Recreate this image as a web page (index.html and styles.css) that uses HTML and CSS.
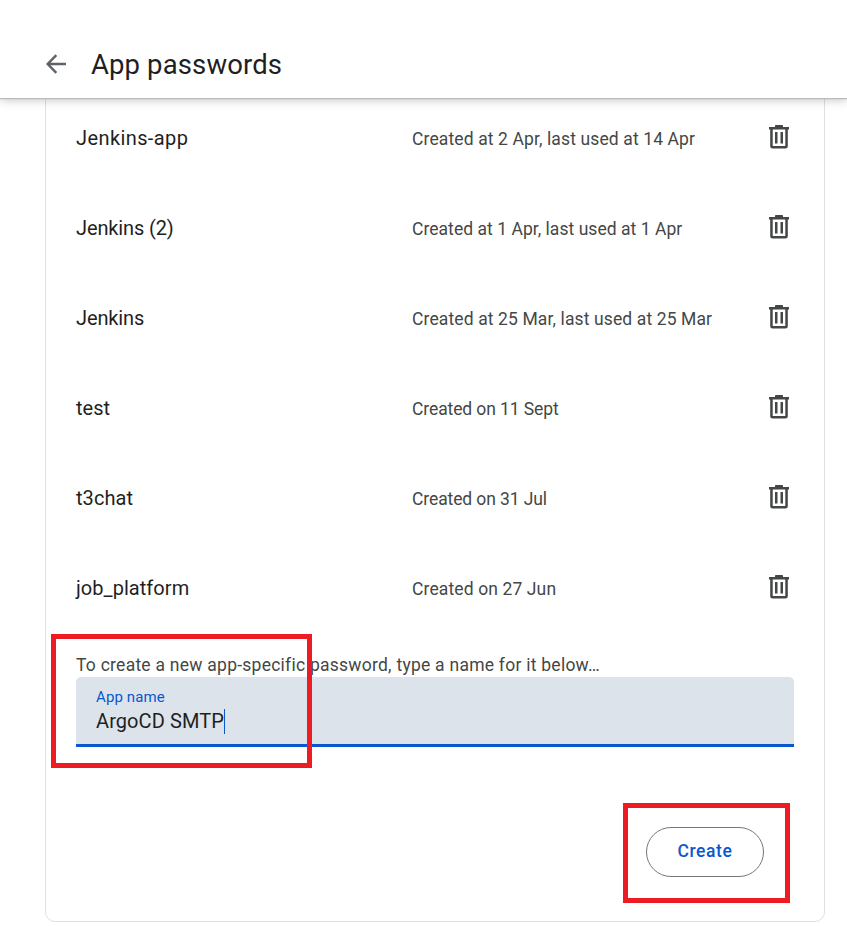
FILE: index.html
```html
<!DOCTYPE html>
<html lang="en-GB">
<head>
<meta charset="utf-8">
<title>App passwords</title>
<link rel="stylesheet" href="styles.css">
</head>
<body>
<svg class="defs" aria-hidden="true">
  <symbol id="trash" viewBox="0 0 20 24">
    <path fill-rule="evenodd" d="M6 .8a.8.8 0 0 1 .8-.8h6.400a.8.800 0 0 1 .8.8V2h6v2.500h-1.200V21a2.500 2.500 0 0 1-2.500 2.500H3.700A2.500 2.500 0 0 1 1.200 21V4.500H0V2h6zM3.700 4.500V21h12.600V4.500z"/>
    <path d="M6 7h2.500v11.500H6zM11.500 7H14v11.500h-2.500z"/>
  </symbol>
</svg>
<header class="topbar">
  <svg class="back" viewBox="0 0 20 20"><path d="M20 10H2M10.300 1.200 1.700 10l8.600 8.800"/></svg>
  <h1 class="title">App passwords</h1>
</header>
<main class="card">
  <ul class="list">
    <li class="row"><span class="name name-wide">Jenkins-app</span><span class="meta">Created at 2 Apr, last used at 14 Apr</span><svg class="trash"><use href="#trash"/></svg></li>
    <li class="row"><span class="name name-tight">Jenkins (2)</span><span class="meta meta-normal">Created at 1 Apr, last used at 1 Apr</span><svg class="trash"><use href="#trash"/></svg></li>
    <li class="row"><span class="name name-tight">Jenkins</span><span class="meta">Created at 25 Mar, last used at 25 Mar</span><svg class="trash"><use href="#trash"/></svg></li>
    <li class="row"><span class="name">test</span><span class="meta meta-tight">Created on 11 Sept</span><svg class="trash"><use href="#trash"/></svg></li>
    <li class="row"><span class="name">t3chat</span><span class="meta meta-tight">Created on 31 Jul</span><svg class="trash"><use href="#trash"/></svg></li>
    <li class="row"><span class="name">job_platform</span><span class="meta">Created on 27 Jun</span><svg class="trash"><use href="#trash"/></svg></li>
  </ul>
  <p class="note">To create a new app-specific password, type a name for it below…</p>
  <div class="field">
    <span class="label">App name</span>
    <span class="value">ArgoCD SMTP<i class="caret"></i></span>
  </div>
  <div class="actions"><button class="create">Create</button></div>
</main>
<div class="mark mark-name"></div>
<div class="mark mark-create"></div>
</body>
</html>
```

FILE: styles.css
```css
* { box-sizing: border-box; }
body {
  margin: 0;
  position: relative;
  height: 926px;
  overflow: hidden;
  background: #fff;
  color: #1f1f1f;
  font-family: Roboto, "Liberation Sans", sans-serif;
}
.defs { display: none; }
.topbar {
  position: relative;
  z-index: 1;
  display: flex;
  align-items: center;
  height: 98px;
  padding: 31px 0 0 46px;
  background: #fff;
  box-shadow: 0 1px 1px #b9babd, 0 2px 9px rgba(60, 64, 67, .3);
}
.back {
  width: 20px;
  height: 20px;
  margin: -2px 25px 0 0;
  fill: none;
  stroke: #5f6368;
  stroke-width: 2.400;
}
.title {
  margin: 0;
  font-size: 27.500px;
  font-weight: 400;
  line-height: 35px;
  letter-spacing: .12px;
}
.card {
  width: 780px;
  height: 837px;
  margin: -13px 0 0 45px;
  padding: 7px 30px 0;
  border: 1px solid #e0e0e0;
  border-radius: 10px;
}
.list { margin: 0; padding: 0; list-style: none; }
.row {
  display: grid;
  grid-template-columns: 336px 357px 20px;
  align-items: center;
  height: 90px;
}
.name { font-size: 20px; letter-spacing: .05px; }
.name-wide { letter-spacing: .4px; }
.name-tight { letter-spacing: -.13px; }
.meta { font-size: 17.500px; color: #444746; padding-top: 2px; letter-spacing: .12px; }
.meta-normal { letter-spacing: .04px; }
.meta-tight { letter-spacing: -.1px; }
.trash { width: 20px; height: 24px; margin-top: -2px; fill: #444746; }
.note {
  margin: 20px 0 0;
  font-size: 17.500px;
  line-height: 24px;
  letter-spacing: .25px;
  color: #444746;
  white-space: nowrap;
}
.field {
  display: flex;
  flex-direction: column;
  width: 718px;
  height: 70px;
  padding: 10px 20px 0;
  border-bottom: 3px solid #0b57d0;
  border-radius: 5px 5px 0 0;
  background: #dde3ea;
}
.label { font-size: 15px; line-height: 20px; letter-spacing: .1px; color: #0b57d0; }
.value { display: flex; align-items: center; font-size: 20px; line-height: 28px; letter-spacing: .08px; }
.caret { width: 1px; height: 25px; background: #0b57d0; }
.actions { display: flex; justify-content: flex-end; padding: 80px 30px 0 0; }
.create {
  width: 118px;
  height: 50px;
  padding: 0 0 2px;
  border: 1px solid #747775;
  border-radius: 25px;
  background: #fff;
  color: #0b57d0;
  font: 500 17.500px Roboto, "Liberation Sans", sans-serif;
  letter-spacing: .6px;
}
.mark { position: absolute; z-index: 2; border: 5px solid #ed1c24; }
.mark-name { left: 51px; top: 634px; width: 261px; height: 134px; }
.mark-create { left: 623px; top: 803px; width: 167px; height: 100px; }
```
